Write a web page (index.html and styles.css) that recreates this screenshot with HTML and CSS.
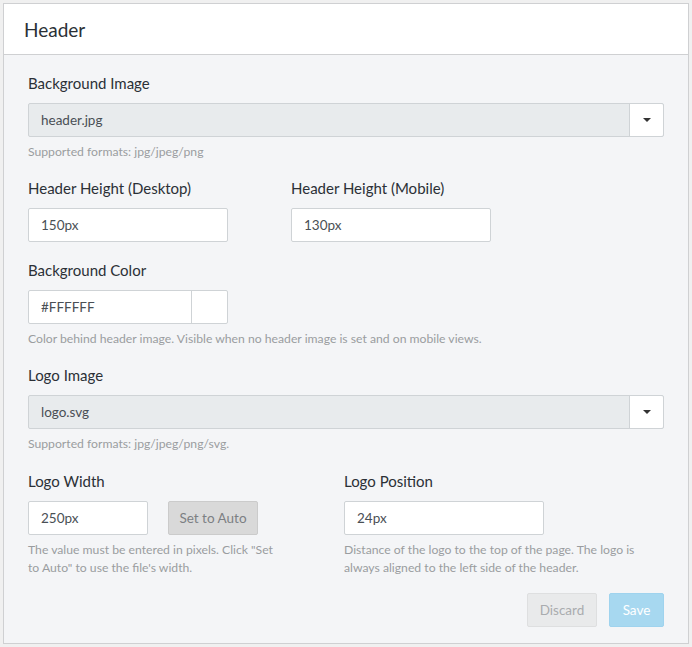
FILE: index.html
```html
<!DOCTYPE html>
<html>
<head>
<meta charset="utf-8">
<link rel="stylesheet" href="styles.css">
</head>
<body>
<div class="card">
  <div class="card-header">Header</div>
  <div class="card-body">
    <div class="group">
      <div class="label">Background Image</div>
      <div class="select">
        <div class="select-value">header.jpg</div>
        <div class="select-btn"><span class="caret"></span></div>
      </div>
      <div class="help">Supported formats: jpg/jpeg/png</div>
    </div>

    <div class="group row row-a">
      <div class="col">
        <div class="label">Header Height (Desktop)</div>
        <div class="input w200">150px</div>
      </div>
      <div class="col">
        <div class="label">Header Height (Mobile)</div>
        <div class="input w200">130px</div>
      </div>
    </div>

    <div class="group">
      <div class="label">Background Color</div>
      <div class="color-input">
        <div class="color-text">#FFFFFF</div>
        <div class="color-swatch"></div>
      </div>
      <div class="help">Color behind header image. Visible when no header image is set and on mobile views.</div>
    </div>

    <div class="group group-logo">
      <div class="label">Logo Image</div>
      <div class="select">
        <div class="select-value">logo.svg</div>
        <div class="select-btn"><span class="caret"></span></div>
      </div>
      <div class="help">Supported formats: jpg/jpeg/png/svg.</div>
    </div>

    <div class="group row row-b">
      <div class="col">
        <div class="label">Logo Width</div>
        <div class="inline">
          <div class="input w120">250px</div>
          <div class="btn btn-auto">Set to Auto</div>
        </div>
        <div class="help narrow">The value must be entered in pixels. Click "Set to Auto" to use the file's width.</div>
      </div>
      <div class="col">
        <div class="label">Logo Position</div>
        <div class="input w200">24px</div>
        <div class="help narrow2">Distance of the logo to the top of the page. The logo is always aligned to the left side of the header.</div>
      </div>
    </div>

    <div class="actions">
      <div class="btn btn-discard">Discard</div>
      <div class="btn btn-save">Save</div>
    </div>
  </div>
</div>
</body>
</html>
```

FILE: styles.css
```css
* { box-sizing: border-box; }
html, body { margin: 0; padding: 0; background: #f0f0f0; }
body {
  padding: 3px 0 0 3px;
  font-family: "Lato", "Noto Sans", sans-serif;
  color: #333;
}
.card {
  width: 686px;
  height: 641px;
  border: 1px solid #cfd0d2;
  background: #f4f5f7;
}
.card-header {
  height: 51px;
  background: #fff;
  border-bottom: 1px solid #cfd0d2;
  padding-left: 20px;
  font-size: 19px;
  line-height: 52px;
  color: #2b3036;
}
.card-body {
  padding: 18px 24px 16px 24px;
}
.group { margin-bottom: 17px; }
.group.row-a { margin-bottom: 18px; }
.group.group-logo { margin-bottom: 18px; }
.group.row-b { margin-bottom: 16px; }
.label {
  font-size: 15px;
  line-height: 20px;
  margin-bottom: 10px;
  color: #2b3036;
}
.select {
  display: flex;
  height: 34px;
  border: 1px solid #cfd3d6;
  border-radius: 2px;
  background: #e8ebed;
}
.select-value {
  flex: 1;
  padding-left: 12px;
  font-size: 13.5px;
  line-height: 32px;
  color: #4a4f55;
}
.select-btn {
  width: 34px;
  background: #fff;
  border-left: 1px solid #cfd3d6;
  border-radius: 0 2px 2px 0;
  display: flex;
  align-items: center;
  justify-content: center;
}
.caret {
  width: 0; height: 0;
  border-left: 4px solid transparent;
  border-right: 4px solid transparent;
  border-top: 4px solid #333;
}
.help {
  margin-top: 6px;
  font-size: 12.2px;
  line-height: 18px;
  color: #9a9da0;
}
.narrow { width: 252px; }
.narrow2 { width: 300px; }
.row { display: grid; }
.row-a { grid-template-columns: 263px 1fr; }
.row-b { grid-template-columns: 316px 1fr; }
.input {
  height: 34px;
  background: #fff;
  border: 1px solid #cfd3d6;
  border-radius: 2px;
  padding-left: 12px;
  font-size: 13.5px;
  line-height: 32px;
  color: #4a4f55;
}
.w200 { width: 200px; }
.w120 { width: 120px; }
.color-input {
  display: flex;
  width: 200px;
  height: 34px;
  background: #fff;
  border: 1px solid #cfd3d6;
  border-radius: 2px;
}
.color-text {
  flex: 1;
  padding-left: 12px;
  font-size: 13.5px;
  line-height: 32px;
  color: #4a4f55;
}
.color-swatch {
  width: 36px;
  border-left: 1px solid #cfd3d6;
}
.inline { display: flex; gap: 20px; }
.btn {
  height: 34px;
  border-radius: 2px;
  font-size: 13.5px;
  line-height: 32px;
  text-align: center;
}
.btn-auto {
  width: 90px;
  background: #d9d9d9;
  border: 1px solid #cbcbcb;
  color: #7c7f83;
}
.actions {
  display: flex;
  justify-content: flex-end;
  gap: 12px;
}
.btn-discard {
  width: 70px;
  background: #e9eaeb;
  border: 1px solid #dedfe0;
  color: #a9acaf;
}
.btn-save {
  width: 55px;
  background: #a7d8f0;
  border: 1px solid #9fd3ee;
  color: #fff;
}
```
